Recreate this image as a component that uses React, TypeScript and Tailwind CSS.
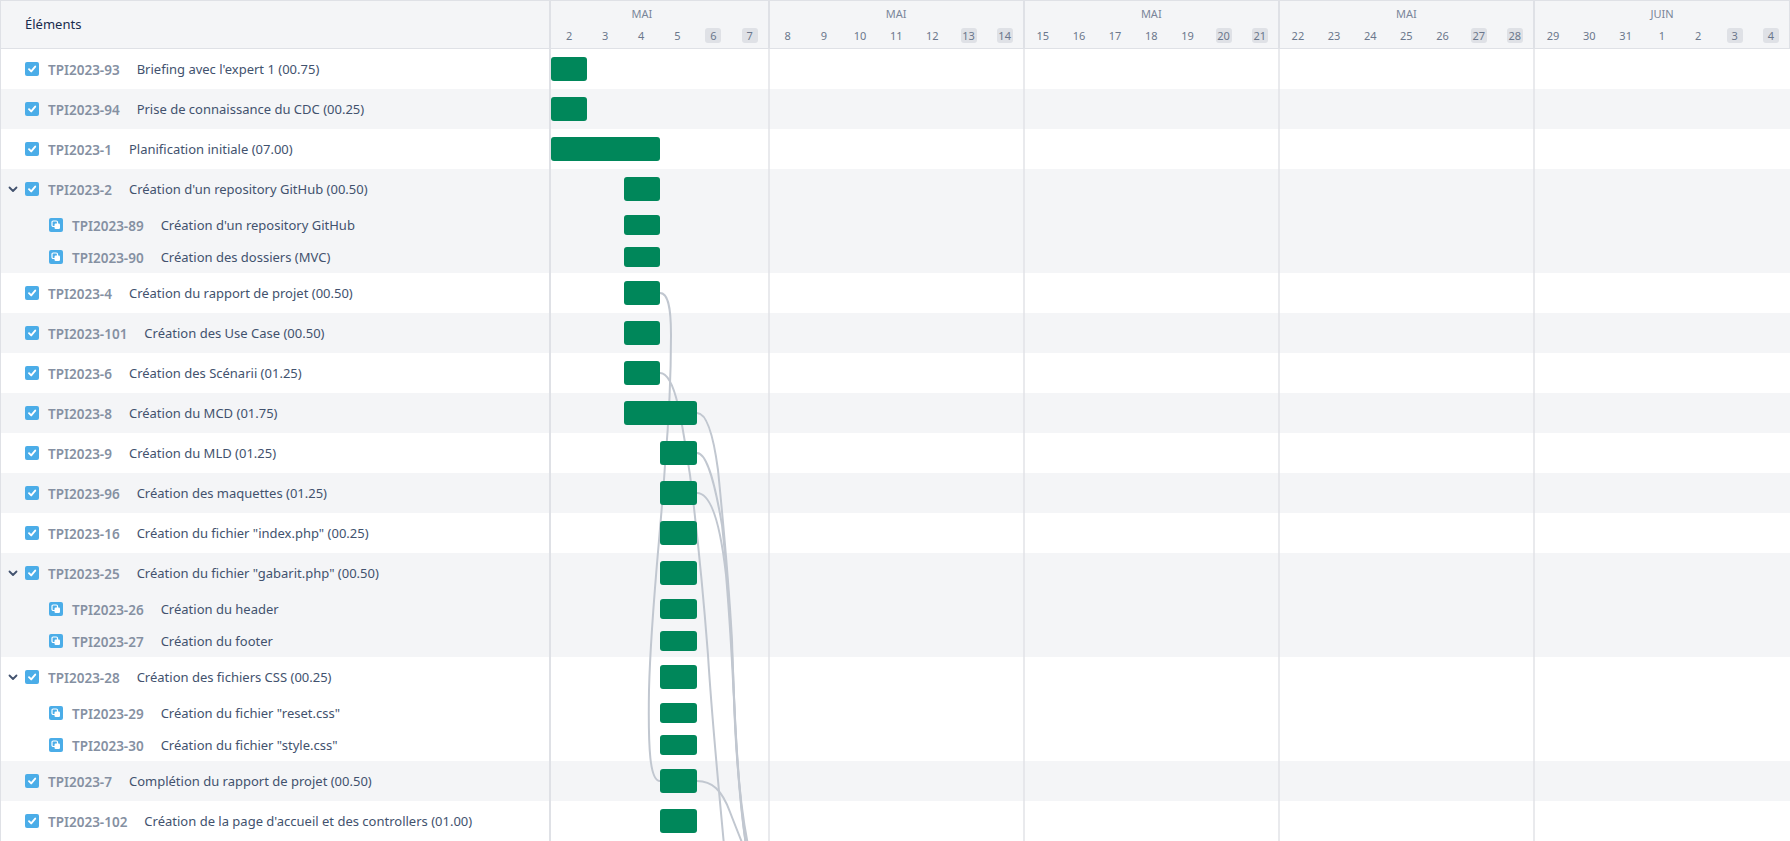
const FONT = "font-['Noto_Sans',sans-serif]"

interface Item {
  id: string
  title: string
  start: number
  span: number
  open?: boolean
  children?: { id: string; title: string }[]
}

const items: Item[] = [
  { id: "TPI2023-93", title: "Briefing avec l'expert 1 (00.75)", start: 0, span: 1 },
  { id: "TPI2023-94", title: "Prise de connaissance du CDC (00.25)", start: 0, span: 1 },
  { id: "TPI2023-1", title: "Planification initiale (07.00)", start: 0, span: 3 },
  {
    id: "TPI2023-2",
    title: "Création d'un repository GitHub (00.50)",
    start: 2,
    span: 1,
    open: true,
    children: [
      { id: "TPI2023-89", title: "Création d'un repository GitHub" },
      { id: "TPI2023-90", title: "Création des dossiers (MVC)" },
    ],
  },
  { id: "TPI2023-4", title: "Création du rapport de projet (00.50)", start: 2, span: 1 },
  { id: "TPI2023-101", title: "Création des Use Case (00.50)", start: 2, span: 1 },
  { id: "TPI2023-6", title: "Création des Scénarii (01.25)", start: 2, span: 1 },
  { id: "TPI2023-8", title: "Création du MCD (01.75)", start: 2, span: 2 },
  { id: "TPI2023-9", title: "Création du MLD (01.25)", start: 3, span: 1 },
  { id: "TPI2023-96", title: "Création des maquettes (01.25)", start: 3, span: 1 },
  { id: "TPI2023-16", title: 'Création du fichier "index.php" (00.25)', start: 3, span: 1 },
  {
    id: "TPI2023-25",
    title: 'Création du fichier "gabarit.php" (00.50)',
    start: 3,
    span: 1,
    open: true,
    children: [
      { id: "TPI2023-26", title: "Création du header" },
      { id: "TPI2023-27", title: "Création du footer" },
    ],
  },
  {
    id: "TPI2023-28",
    title: "Création des fichiers CSS (00.25)",
    start: 3,
    span: 1,
    open: true,
    children: [
      { id: "TPI2023-29", title: 'Création du fichier "reset.css"' },
      { id: "TPI2023-30", title: 'Création du fichier "style.css"' },
    ],
  },
  { id: "TPI2023-7", title: "Complétion du rapport de projet (00.50)", start: 3, span: 1 },
  { id: "TPI2023-102", title: "Création de la page d'accueil et des controllers (01.00)", start: 3, span: 1 },
]

const months = [
  { name: "MAI", days: [2, 3, 4, 5, 6, 7], off: [6, 7], labelPad: "pr-[35px]" },
  { name: "MAI", days: [8, 9, 10, 11, 12, 13, 14], off: [13, 14], labelPad: "" },
  { name: "MAI", days: [15, 16, 17, 18, 19, 20, 21], off: [20, 21], labelPad: "" },
  { name: "MAI", days: [22, 23, 24, 25, 26, 27, 28], off: [27, 28], labelPad: "" },
  { name: "JUIN", days: [29, 30, 31, 1, 2, 3, 4], off: [3, 4], labelPad: "" },
]

// dependency lines, in page coordinates
const links = [
  "M660 293 C667 293 671 303 671 335 C671 385 668 430 665 465 C661 530 651 610 649 690 C648 750 650 781 660 781",
  "M660 373 C668 373 674 388 678 405 C684 432 686 450 690 475 C697 530 703 590 708 655 C712 720 718 780 724 845",
  "M697 413 C708 413 714 440 718 470 C722 510 728 570 732 640 C734 710 738 790 746 845",
  "M697 453 C708 453 716 490 722 525 C727 570 730 610 733 670 C735 730 739 800 746 845",
  "M697 493 C712 493 721 530 726 575 C730 620 732 660 734 700 C736 760 741 810 748 845",
  "M697 781 C712 781 722 790 730 812 C735 825 739 835 743 845",
]

function TaskIcon() {
  return (
    <svg viewBox="0 0 14 14" className="w-3.5 h-3.5 shrink-0">
      <rect width="14" height="14" rx="2" fill="#4bade8" />
      <path d="M4 7.2 L6.2 9.4 L10.2 4.6" fill="none" stroke="#fff" strokeWidth="1.9" strokeLinecap="round" strokeLinejoin="round" />
    </svg>
  )
}

function SubtaskIcon() {
  return (
    <svg viewBox="0 0 14 14" className="w-3.5 h-3.5 shrink-0">
      <rect width="14" height="14" rx="2" fill="#4bade8" />
      <rect x="3" y="3" width="5.5" height="5.5" rx="1.2" fill="none" stroke="#fff" strokeWidth="1.2" />
      <rect x="5.5" y="5.5" width="5.5" height="5.5" rx="1.2" fill="#fff" />
    </svg>
  )
}

function Chevron() {
  return (
    <svg viewBox="0 0 10 10" className="w-2.5 h-2.5">
      <path d="M1.5 3.5 L5 7 L8.5 3.5" fill="none" stroke="#42526e" strokeWidth="1.8" strokeLinecap="round" strokeLinejoin="round" />
    </svg>
  )
}

function Bar({ start, span, small }: { start: number; span: number; small?: boolean }) {
  return (
    <div
      className={`relative z-10 ${small ? "h-5" : "h-6"} rounded-[3px] bg-[#00875a]`}
      style={{ gridColumn: `${start + 1} / span ${span}` }}
    />
  )
}

function Label({ id, title }: { id: string; title: string }) {
  return (
    <>
      <span className="ml-[9px] pt-[2px] text-[13.5px] font-semibold text-[#8590a2] whitespace-nowrap">{id}</span>
      <span className="ml-[17px] pt-[2px] text-[#42526e] whitespace-nowrap">{title}</span>
    </>
  )
}

const timeline = "relative flex-1 grid grid-cols-[repeat(34,1fr)] items-center"

export default function App() {
  return (
    <div className={`relative h-screen overflow-hidden bg-white border-l border-t border-[#dfe1e6] text-[13px] ${FONT}`}>
      <div className="flex h-[47px] bg-[#f4f5f7] border-b border-[#dfe1e6] box-content">
        <div className="w-[550px] flex items-center pl-6 text-[#172b4d] border-r-2 border-[#dfe1e6] text-[13px] shrink-0">
          Éléments
        </div>
        <div className="flex-1 grid grid-cols-[repeat(34,1fr)]">
          {months.map((m, i) => (
            <div
              key={i}
              className="flex flex-col pt-[5px] border-r-2 border-[#dfe1e6] last:border-r"
              style={{ gridColumn: `span ${m.days.length}` }}
            >
              <div className={`text-center text-[11px] leading-4 text-[#7a869a] ${m.labelPad}`}>{m.name}</div>
              <div className="flex mt-[6px]">
                {m.days.map((d) => (
                  <div key={d} className="flex-1 flex justify-center">
                    <span
                      className={`min-w-4 h-[15px] px-[1px] text-center text-[11px] leading-[15px] rounded-[3px] text-[#6b778c] ${
                        m.off.includes(d) ? "bg-[#dfe1e6]" : ""
                      }`}
                    >
                      {d}
                    </span>
                  </div>
                ))}
              </div>
            </div>
          ))}
        </div>
      </div>

      {items.map((item, i) => (
        <div key={item.id} className={i % 2 === 1 ? "bg-[#f4f5f7]" : "bg-white"}>
          <div className="flex h-10">
            <div className="w-[550px] shrink-0 flex items-center pl-[7px] border-r-2 border-[#dfe1e6]">
              <span className="w-[17px] flex items-center">{item.open && <Chevron />}</span>
              <TaskIcon />
              <Label id={item.id} title={item.title} />
            </div>
            <div className={timeline}>
              <Bar start={item.start} span={item.span} />
            </div>
          </div>
          {item.children?.map((c) => (
            <div key={c.id} className="flex h-8">
              <div className="w-[550px] shrink-0 flex items-center pl-[48px] border-r-2 border-[#dfe1e6]">
                <SubtaskIcon />
                <Label id={c.id} title={c.title} />
              </div>
              <div className={timeline}>
                <Bar start={item.start} span={item.span} small />
              </div>
            </div>
          ))}
        </div>
      ))}

      {/* month separators over the rows */}
      <div className="absolute left-[550px] right-0 top-[48px] bottom-0 grid grid-cols-[repeat(34,1fr)] pointer-events-none">
        {months.map((m, i) => (
          <div key={i} className="border-r-2 border-[#dfe1e6]/70 last:border-r-0" style={{ gridColumn: `span ${m.days.length}` }} />
        ))}
      </div>

      <svg className="absolute left-[-1px] top-[-1px] pointer-events-none" width="1790" height="841" fill="none">
        {links.map((d, i) => (
          <path key={i} d={d} stroke="#c1c7d0" strokeWidth="2" />
        ))}
      </svg>
    </div>
  )
}
